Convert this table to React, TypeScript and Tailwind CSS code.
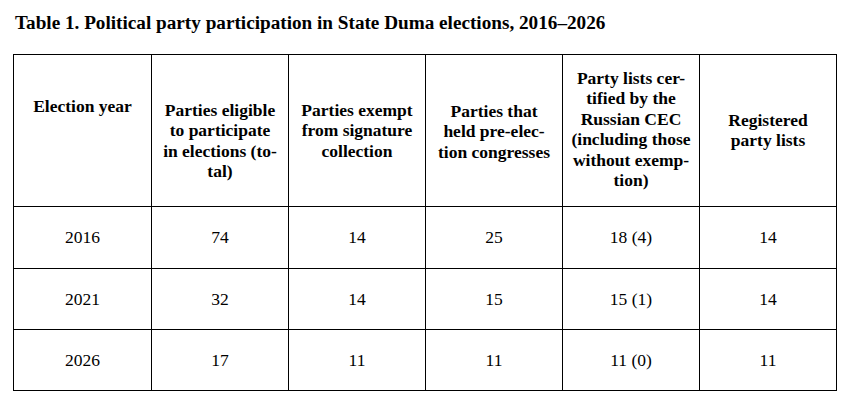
import React from "react";

const headers: { lines: string[]; pt: string }[] = [
  { lines: ["Election year"], pt: "pt-[41px]" },
  { lines: ["Parties eligible", "to participate", "in elections (to-", "tal)"], pt: "pt-[45px]" },
  { lines: ["Parties exempt", "from signature", "collection"], pt: "pt-[45px]" },
  { lines: ["Parties that", "held pre-elec-", "tion congresses"], pt: "pt-[46px]" },
  {
    lines: ["Party lists cer-", "tified by the", "Russian CEC", "(including those", "without exemp-", "tion)"],
    pt: "pt-[13px]",
  },
  { lines: ["Registered", "party lists"], pt: "pt-[55px]" },
];

const rows: string[][] = [
  ["2016", "74", "14", "25", "18 (4)", "14"],
  ["2021", "32", "14", "15", "15 (1)", "14"],
  ["2026", "17", "11", "11", "11 (0)", "11"],
];

export default function App() {
  return (
    <div className="w-[853px] h-[406px] bg-white text-black font-['Liberation_Serif','Times_New_Roman',serif] overflow-hidden">
      <div className="pt-[12px] pl-[15px] text-[19.2px] leading-[22px] font-bold whitespace-nowrap">
        Table 1. Political party participation in State Duma elections, 2016–2026
      </div>
      <div className="ml-[13px] mt-[20px] grid w-fit grid-cols-[138px_137px_137px_137px_137px_137px] grid-rows-[152px_62px_61px_61px] border-l border-t border-black font-['Liberation_Serif','Times_New_Roman',serif] text-[17.5px] leading-[20.4px]">
        {headers.map((h, i) => (
          <div
            key={i}
            className={`border-r border-b border-black flex flex-col items-center font-bold text-center ${h.pt}`}
          >
            {h.lines.map((l, j) => (
              <span key={j} className="whitespace-nowrap">
                {l}
              </span>
            ))}
          </div>
        ))}
        {rows.map((r, ri) =>
          r.map((c, ci) => (
            <div
              key={`${ri}-${ci}`}
              className="border-r border-b border-black flex items-center justify-center"
            >
              {c}
            </div>
          ))
        )}
      </div>
    </div>
  );
}
